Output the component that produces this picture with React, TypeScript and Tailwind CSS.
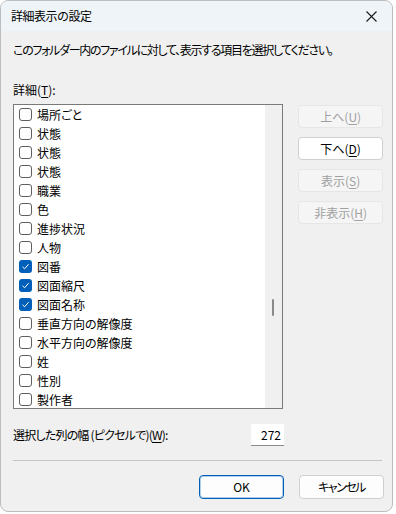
import React from 'react';

const font = "font-['Noto_Sans_CJK_JP','Noto_Sans',sans-serif] [font-feature-settings:'palt']";

const rows: { label: string; checked?: boolean }[] = [
  { label: '場所ごと' },
  { label: '状態' },
  { label: '状態' },
  { label: '状態' },
  { label: '職業' },
  { label: '色' },
  { label: '進捗状況' },
  { label: '人物' },
  { label: '図番', checked: true },
  { label: '図面縮尺', checked: true },
  { label: '図面名称', checked: true },
  { label: '垂直方向の解像度' },
  { label: '水平方向の解像度' },
  { label: '姓' },
  { label: '性別' },
  { label: '製作者' },
];

const Check: React.FC<{ checked?: boolean }> = ({ checked }) =>
  checked ? (
    <span className="flex h-[13px] w-[13px] shrink-0 items-center justify-center rounded-[3px] bg-[#005fb8]">
      <svg width="9" height="9" viewBox="0 0 9 9" fill="none">
        <path d="M1.5 4.8 L3.6 6.8 L7.6 2.2" stroke="white" strokeWidth="1" />
      </svg>
    </span>
  ) : (
    <span className="h-[13px] w-[13px] shrink-0 rounded-[3px] border border-[#5f5f5f] bg-white" />
  );

const SideButton: React.FC<{ label: string; accel: string; disabled?: boolean }> = ({
  label,
  accel,
  disabled,
}) => (
  <div
    className={
      disabled
        ? 'flex h-[23px] items-center justify-center rounded-[4px] border border-[#e6e6e6] bg-[#f5f5f5] text-[#a0a0a0]'
        : 'flex h-[23px] items-center justify-center rounded-[4px] border border-[#d0d0d0] bg-white text-black'
    }
  >
    {label}(<span className="underline underline-offset-2">{accel}</span>)
  </div>
);

export default function App() {
  return (
    <div className={`h-[514px] w-[396px] bg-white ${font} text-[12px] leading-[16px] text-black`}>
      <div className="flex h-[512px] w-[393px] flex-col overflow-hidden rounded-b-lg rounded-t-lg border border-[#bdbdbd] bg-[#f0f0f0]">
        {/* title bar */}
        <div className="flex h-[30px] shrink-0 items-center justify-between bg-[#eff4f9] pl-[10px] pr-[6px]">
          <span className="[font-feature-settings:normal] tracking-[-0.5px]">詳細表示の設定</span>
          <div className="flex h-[30px] w-[30px] items-center justify-center">
            <svg width="11" height="11" viewBox="0 0 11 11">
              <path d="M0.5 0.5 L10.5 10.5 M10.5 0.5 L0.5 10.5" stroke="#1a1a1a" strokeWidth="1.1" />
            </svg>
          </div>
        </div>

        <div className="flex flex-col pl-[12px] pr-[9px]">
          <p className="mt-[11px] tracking-[-1.3px]">このフォルダー内のファイルに対して、表示する項目を選択してください。</p>
          <p className="mt-[24px]">
            詳細(<span className="underline underline-offset-2">T</span>):
          </p>

          <div className="mt-[6px] flex gap-[15px]">
            <div className="flex h-[305px] w-[271px] border border-[#7a7a7a] bg-white">
              <div className="flex flex-1 flex-col overflow-hidden pl-[5px]">
                {rows.map((r, i) => (
                  <div key={i} className="flex h-[19px] shrink-0 items-center gap-[5px]">
                    <Check checked={r.checked} />
                    <span>{r.label}</span>
                  </div>
                ))}
              </div>
              <div className="relative w-[17px] bg-[#f0f0f0]">
                <div className="absolute left-[7px] top-[194px] h-[17px] w-[2px] rounded-full bg-[#8a8a8a]" />
              </div>
            </div>

            <div className="flex w-[85px] flex-col gap-[9px] pt-[1px]">
              <SideButton label="上へ" accel="U" disabled />
              <SideButton label="下へ" accel="D" />
              <SideButton label="表示" accel="S" disabled />
              <SideButton label="非表示" accel="H" disabled />
            </div>
          </div>

          <div className="mt-[15px] flex w-[271px] items-center justify-between">
            <span className="tracking-[-0.8px]">
              選択した列の幅 (ピクセルで)(<span className="underline underline-offset-2">W</span>):
            </span>
            <div className="flex h-[22px] w-[33px] items-center justify-end border-b border-[#8a8a8a] bg-white pr-[3px]">
              272
            </div>
          </div>

          <div className="mt-[14px] h-px w-[369px] bg-[#c4c4c4]" />

          <div className="mt-[14px] flex w-[371px] justify-end gap-[15px]">
            <div className="flex h-[24px] w-[85px] items-center justify-center rounded-[4px] border border-[#005fb8] bg-[#fdfdfd] outline outline-1 -outline-offset-2 outline-[#005fb8]/30">
              OK
            </div>
            <div className="flex h-[24px] w-[85px] items-center justify-center rounded-[4px] border border-[#d0d0d0] bg-[#fdfdfd] tracking-[-1.5px]">
              キャンセル
            </div>
          </div>
        </div>
      </div>
    </div>
  );
}
